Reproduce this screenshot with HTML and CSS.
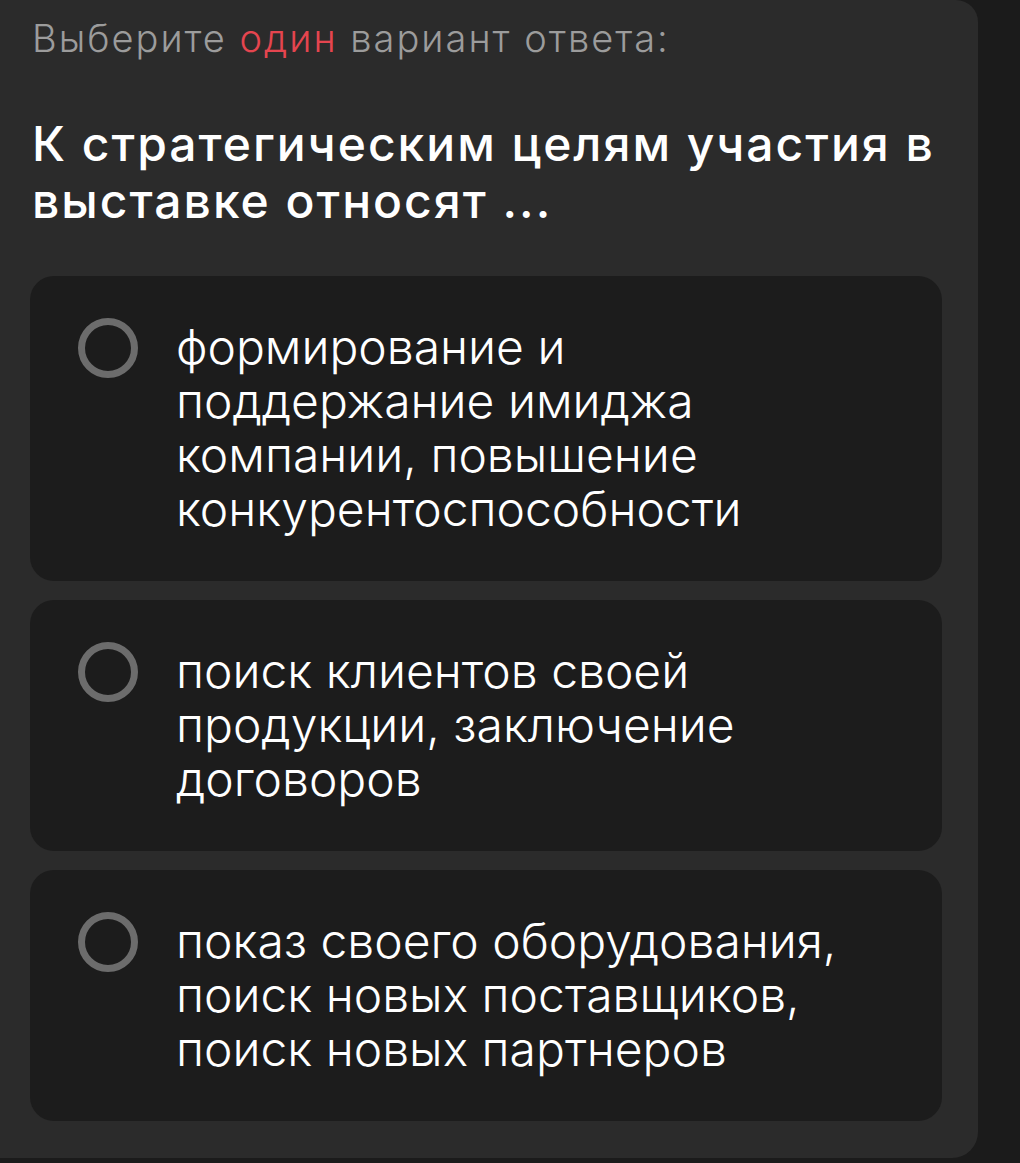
FILE: index.html
```html
<!DOCTYPE html>
<html lang="ru">
<head>
<meta charset="UTF-8">
<meta name="viewport" content="width=device-width, initial-scale=1.0">
<title>Тест</title>
<link rel="stylesheet" href="styles.css">
</head>
<body>

<div class="panel">
    <div class="hint">Выберите <span class="accent">один</span> вариант ответа:</div>
    <div class="question">К стратегическим целям участия в выставке относят ...</div>

    <div class="answers">
        <label class="answer">
            <span class="radio"></span>
            <span class="answer-text">формирование и поддержание имиджа компании, повышение конкурентоспособности</span>
        </label>
        <label class="answer">
            <span class="radio"></span>
            <span class="answer-text">поиск клиентов своей продукции, заключение договоров</span>
        </label>
        <label class="answer">
            <span class="radio"></span>
            <span class="answer-text">показ своего оборудования, поиск новых поставщиков, поиск новых партнеров</span>
        </label>
    </div>
</div>

</body>
</html>
```

FILE: styles.css
```css
body {
    margin: 0;
    background-color: #1b1b1b;
    font-family: Inter, "Open Sans", sans-serif;
}
.panel {
    width: 978px;
    box-sizing: border-box;
    padding: 12px 36px 37px 30px;
    background-color: #2b2b2b;
    border-radius: 0 22px 26px 0;
}
.hint {
    padding-left: 2px;
    font-weight: 300;
    font-size: 38px;
    letter-spacing: 2px;
    line-height: 52px;
    color: #9c9c9c;
}
.accent {
    color: #e5454f;
}
.question {
    margin-top: 51px;
    padding-left: 2px;
    font-weight: 500;
    font-size: 48px;
    letter-spacing: 2px;
    line-height: 57px;
    color: #fff;
}
.answers {
    margin-top: 47px;
    display: flex;
    flex-direction: column;
    gap: 19px;
}
.answer {
    display: flex;
    align-items: flex-start;
    gap: 38px;
    padding: 44px 80px 45px 48px;
    background-color: #1c1c1c;
    border-radius: 24px;
}
.radio {
    flex: none;
    width: 60px;
    height: 60px;
    margin-top: -2px;
    box-sizing: border-box;
    border: 7px solid #6c6c6c;
    border-radius: 50%;
}
.answer-text {
    font-weight: 300;
    font-size: 48px;
    line-height: 54px;
    color: #fff;
}
```
